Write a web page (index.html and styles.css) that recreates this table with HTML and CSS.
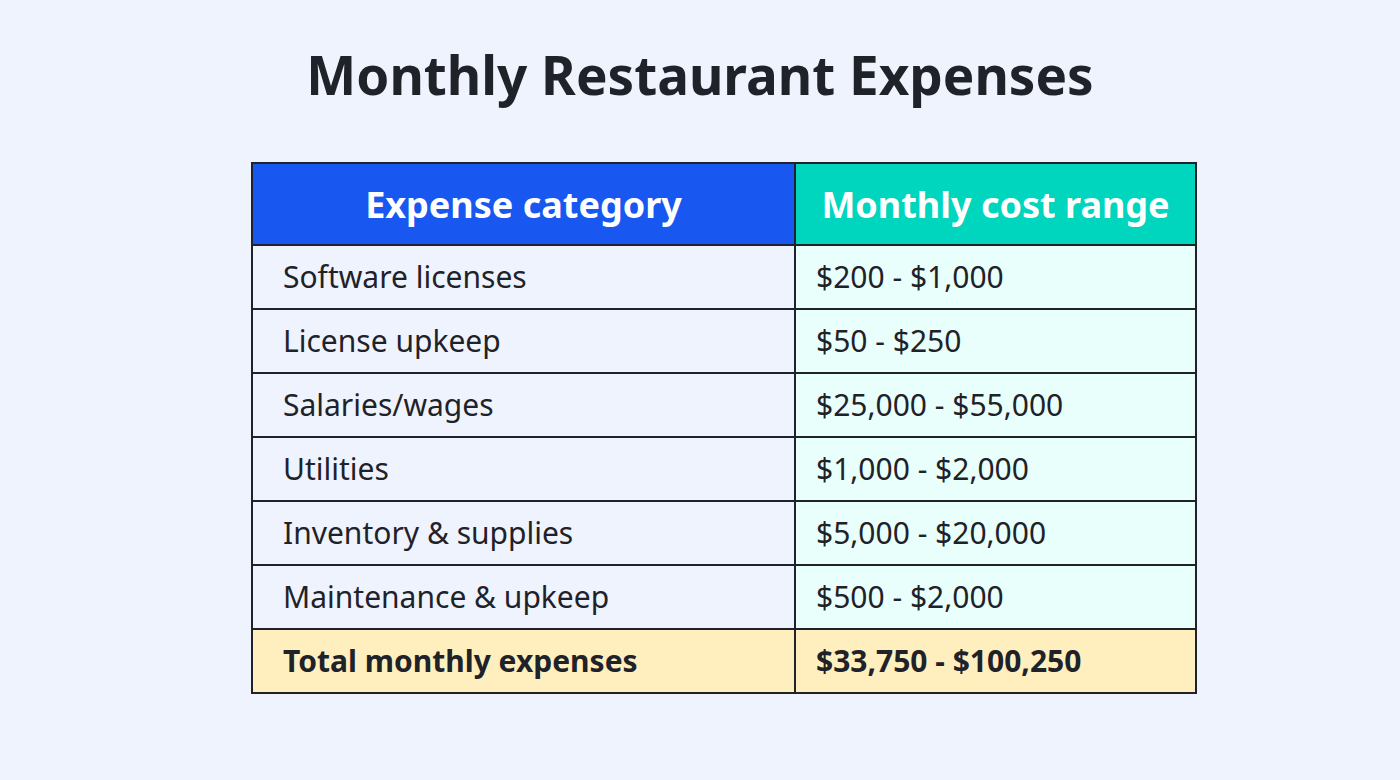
FILE: index.html
```html
<!DOCTYPE html>
<html lang="en">
<head>
<meta charset="utf-8">
<title>Monthly Restaurant Expenses</title>
<link rel="stylesheet" href="styles.css">
</head>
<body>
<main class="page">
  <h1 class="title">Monthly Restaurant Expenses</h1>
  <table class="expenses">
    <colgroup><col class="col-cat"><col class="col-cost"></colgroup>
    <thead>
      <tr><th class="th-cat">Expense category</th><th class="th-cost">Monthly cost range</th></tr>
    </thead>
    <tbody>
      <tr><td>Software licenses</td><td>$200 - $1,000</td></tr>
      <tr><td>License upkeep</td><td>$50 - $250</td></tr>
      <tr><td>Salaries/wages</td><td>$25,000 - $55,000</td></tr>
      <tr><td>Utilities</td><td>$1,000 - $2,000</td></tr>
      <tr><td>Inventory &amp; supplies</td><td>$5,000 - $20,000</td></tr>
      <tr><td>Maintenance &amp; upkeep</td><td>$500 - $2,000</td></tr>
      <tr class="total"><td>Total monthly expenses</td><td>$33,750 - $100,250</td></tr>
    </tbody>
  </table>
</main>
</body>
</html>
```
FILE: styles.css
```css
html, body {
  margin: 0;
  padding: 0;
  background: #eff3fe;
}
body {
  font-family: "Noto Sans", "Open Sans", sans-serif;
  color: #1f2228;
}
.page {
  width: 1400px;
  height: 780px;
  display: flex;
  flex-direction: column;
  align-items: center;
}
.title {
  margin: 39px 0 0;
  font-size: 53px;
  font-weight: 700;
  line-height: 72px;
  color: #1f2228;
}
.expenses {
  margin: 51px 0 0 48px;
  border-collapse: collapse;
  width: 944px;
  table-layout: fixed;
}
.col-cat { width: 543px; }
.col-cost { width: 401px; }
.expenses th, .expenses td {
  border: 2px solid #1f2228;
}
.expenses th {
  height: 80px;
  padding: 0;
  font-size: 36px;
  font-weight: 700;
  color: #ffffff;
  text-align: center;
}
.th-cat { background: #1857f0; }
.th-cost { background: #00d5bd; }
.expenses td {
  height: 62px;
  padding: 0 0 0 30px;
  font-size: 30px;
  line-height: 40px;
  color: #1f2228;
}
.expenses td:first-child { background: #eff3fe; padding-left: 30px; }
.expenses td:last-child { background: #e8fffc; padding-left: 20px; }
.expenses .total td {
  background: #ffefbf;
  font-weight: 700;
}
```
